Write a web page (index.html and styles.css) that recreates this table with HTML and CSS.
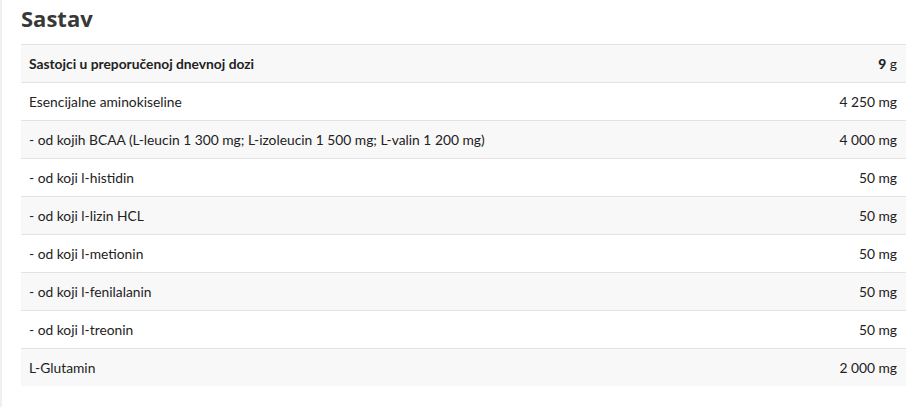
FILE: index.html
```html
<!DOCTYPE html>
<html lang="hr">
<head>
<meta charset="utf-8">
<link rel="stylesheet" href="styles.css">
</head>
<body>
<div class="page">
  <h2 class="title">Sastav</h2>
  <table class="comp">
    <tbody>
      <tr class="head"><td>Sastojci u preporučenoj dnevnoj dozi</td><td class="val"><strong>9</strong> g</td></tr>
      <tr><td>Esencijalne aminokiseline</td><td class="val">4 250 mg</td></tr>
      <tr><td>- od kojih BCAA (L-leucin 1 300 mg; L-izoleucin 1 500 mg; L-valin 1 200 mg)</td><td class="val">4 000 mg</td></tr>
      <tr><td>- od koji l-histidin</td><td class="val">50 mg</td></tr>
      <tr><td>- od koji l-lizin HCL</td><td class="val">50 mg</td></tr>
      <tr><td>- od koji l-metionin</td><td class="val">50 mg</td></tr>
      <tr><td>- od koji l-fenilalanin</td><td class="val">50 mg</td></tr>
      <tr><td>- od koji l-treonin</td><td class="val">50 mg</td></tr>
      <tr><td>L-Glutamin</td><td class="val">2 000 mg</td></tr>
    </tbody>
  </table>
</div>
</body>
</html>
```
FILE: styles.css
```css
html, body {
  margin: 0;
  padding: 0;
  background: #fff;
}
body {
  font-family: Lato, "Open Sans", sans-serif;
  color: #222;
}
.page {
  border-left: 2px solid #f0f0f0;
  min-height: 407px;
  box-sizing: border-box;
  padding: 0 16px 0 19px;
}
.title {
  margin: 0;
  padding-top: 4px;
  height: 40px;
  font-family: "Open Sans", Lato, sans-serif;
  font-size: 22px;
  font-weight: 700;
  color: #383838;
  line-height: 28px;
}
.comp {
  width: 885px;
  border-collapse: collapse;
  font-size: 13.8px;
}
.comp td {
  height: 37px;
  padding: 0 8px;
  border-top: 1px solid #e3e3e3;
  vertical-align: middle;
}
.comp tr:nth-child(odd) td {
  background: #f8f8f8;
}
.comp .head td {
  font-weight: 700;
}
.comp .head .val {
  font-weight: 400;
}
.comp .head strong {
  font-weight: 900;
}
.comp .val {
  text-align: right;
  white-space: nowrap;
  padding-right: 9px;
}
```
